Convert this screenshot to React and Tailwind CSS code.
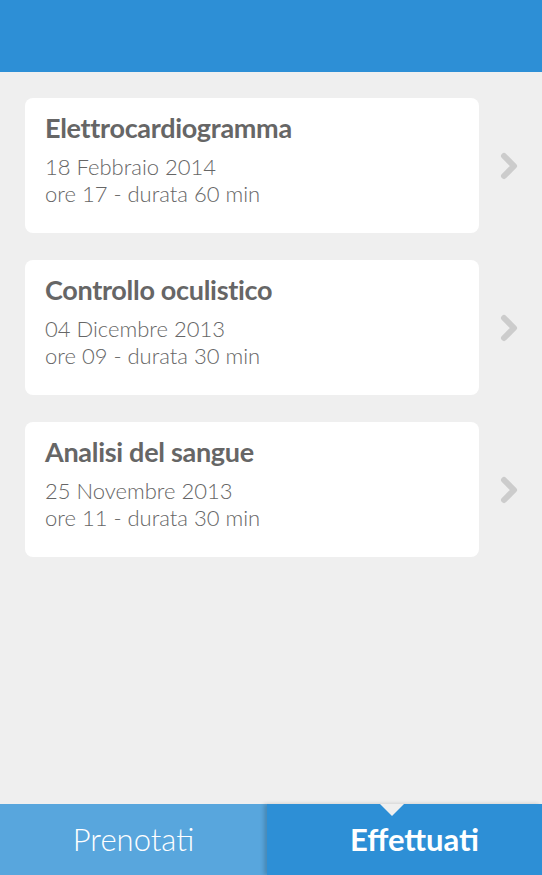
import React from "react";

const items = [
  { title: "Elettrocardiogramma", date: "18 Febbraio 2014", time: "ore 17 - durata 60 min" },
  { title: "Controllo oculistico", date: "04 Dicembre 2013", time: "ore 09 - durata 30 min" },
  { title: "Analisi del sangue", date: "25 Novembre 2013", time: "ore 11 - durata 30 min" },
];

function Chevron() {
  return (
    <svg width="22" height="30" viewBox="0 0 22 30" className="shrink-0">
      <path d="M6 5 L16 15 L6 25" fill="none" stroke="#cccccc" strokeWidth="6" strokeLinecap="round" strokeLinejoin="round" />
    </svg>
  );
}

export default function App() {
  return (
    <div className="w-[542px] h-[875px] bg-[#efefef] flex flex-col overflow-hidden" style={{ fontFamily: "Lato, 'Open Sans', sans-serif" }}>
      <div className="h-[72px] bg-[#2d8fd6] shrink-0" />
      <div className="flex-1 flex flex-col gap-[27px] pt-[26px]">
        {items.map((it) => (
          <div key={it.title} className="flex items-center">
            <div className="ml-[25px] w-[454px] h-[135px] bg-white rounded-[8px] pl-[20px] pt-[13px] text-[#666666]">
              <div className="text-[27px] font-bold leading-[34px] tracking-[-0.3px]">{it.title}</div>
              <div className="text-[22px] font-light leading-[27px] mt-[8px]">{it.date}</div>
              <div className="text-[22px] font-light leading-[27px]">{it.time}</div>
            </div>
            <div className="ml-[19px]">
              <Chevron />
            </div>
          </div>
        ))}
      </div>
      <div className="h-[71px] shrink-0 flex relative">
        <div className="w-[267px] bg-[#58a6dd] flex items-center justify-center text-white text-[31px] font-light">
          Prenotati
        </div>
        <div className="flex-1 bg-[#2d8fd6] flex items-center justify-center text-white text-[31px] font-bold shadow-[-3px_0_4px_rgba(0,0,0,0.18)] relative">
          <span className="ml-[20px]">Effettuati</span>
          <div className="absolute top-0 left-[113px] w-0 h-0 border-l-[12px] border-r-[12px] border-t-[12px] border-l-transparent border-r-transparent border-t-[#efefef]" />
        </div>
      </div>
    </div>
  );
}
